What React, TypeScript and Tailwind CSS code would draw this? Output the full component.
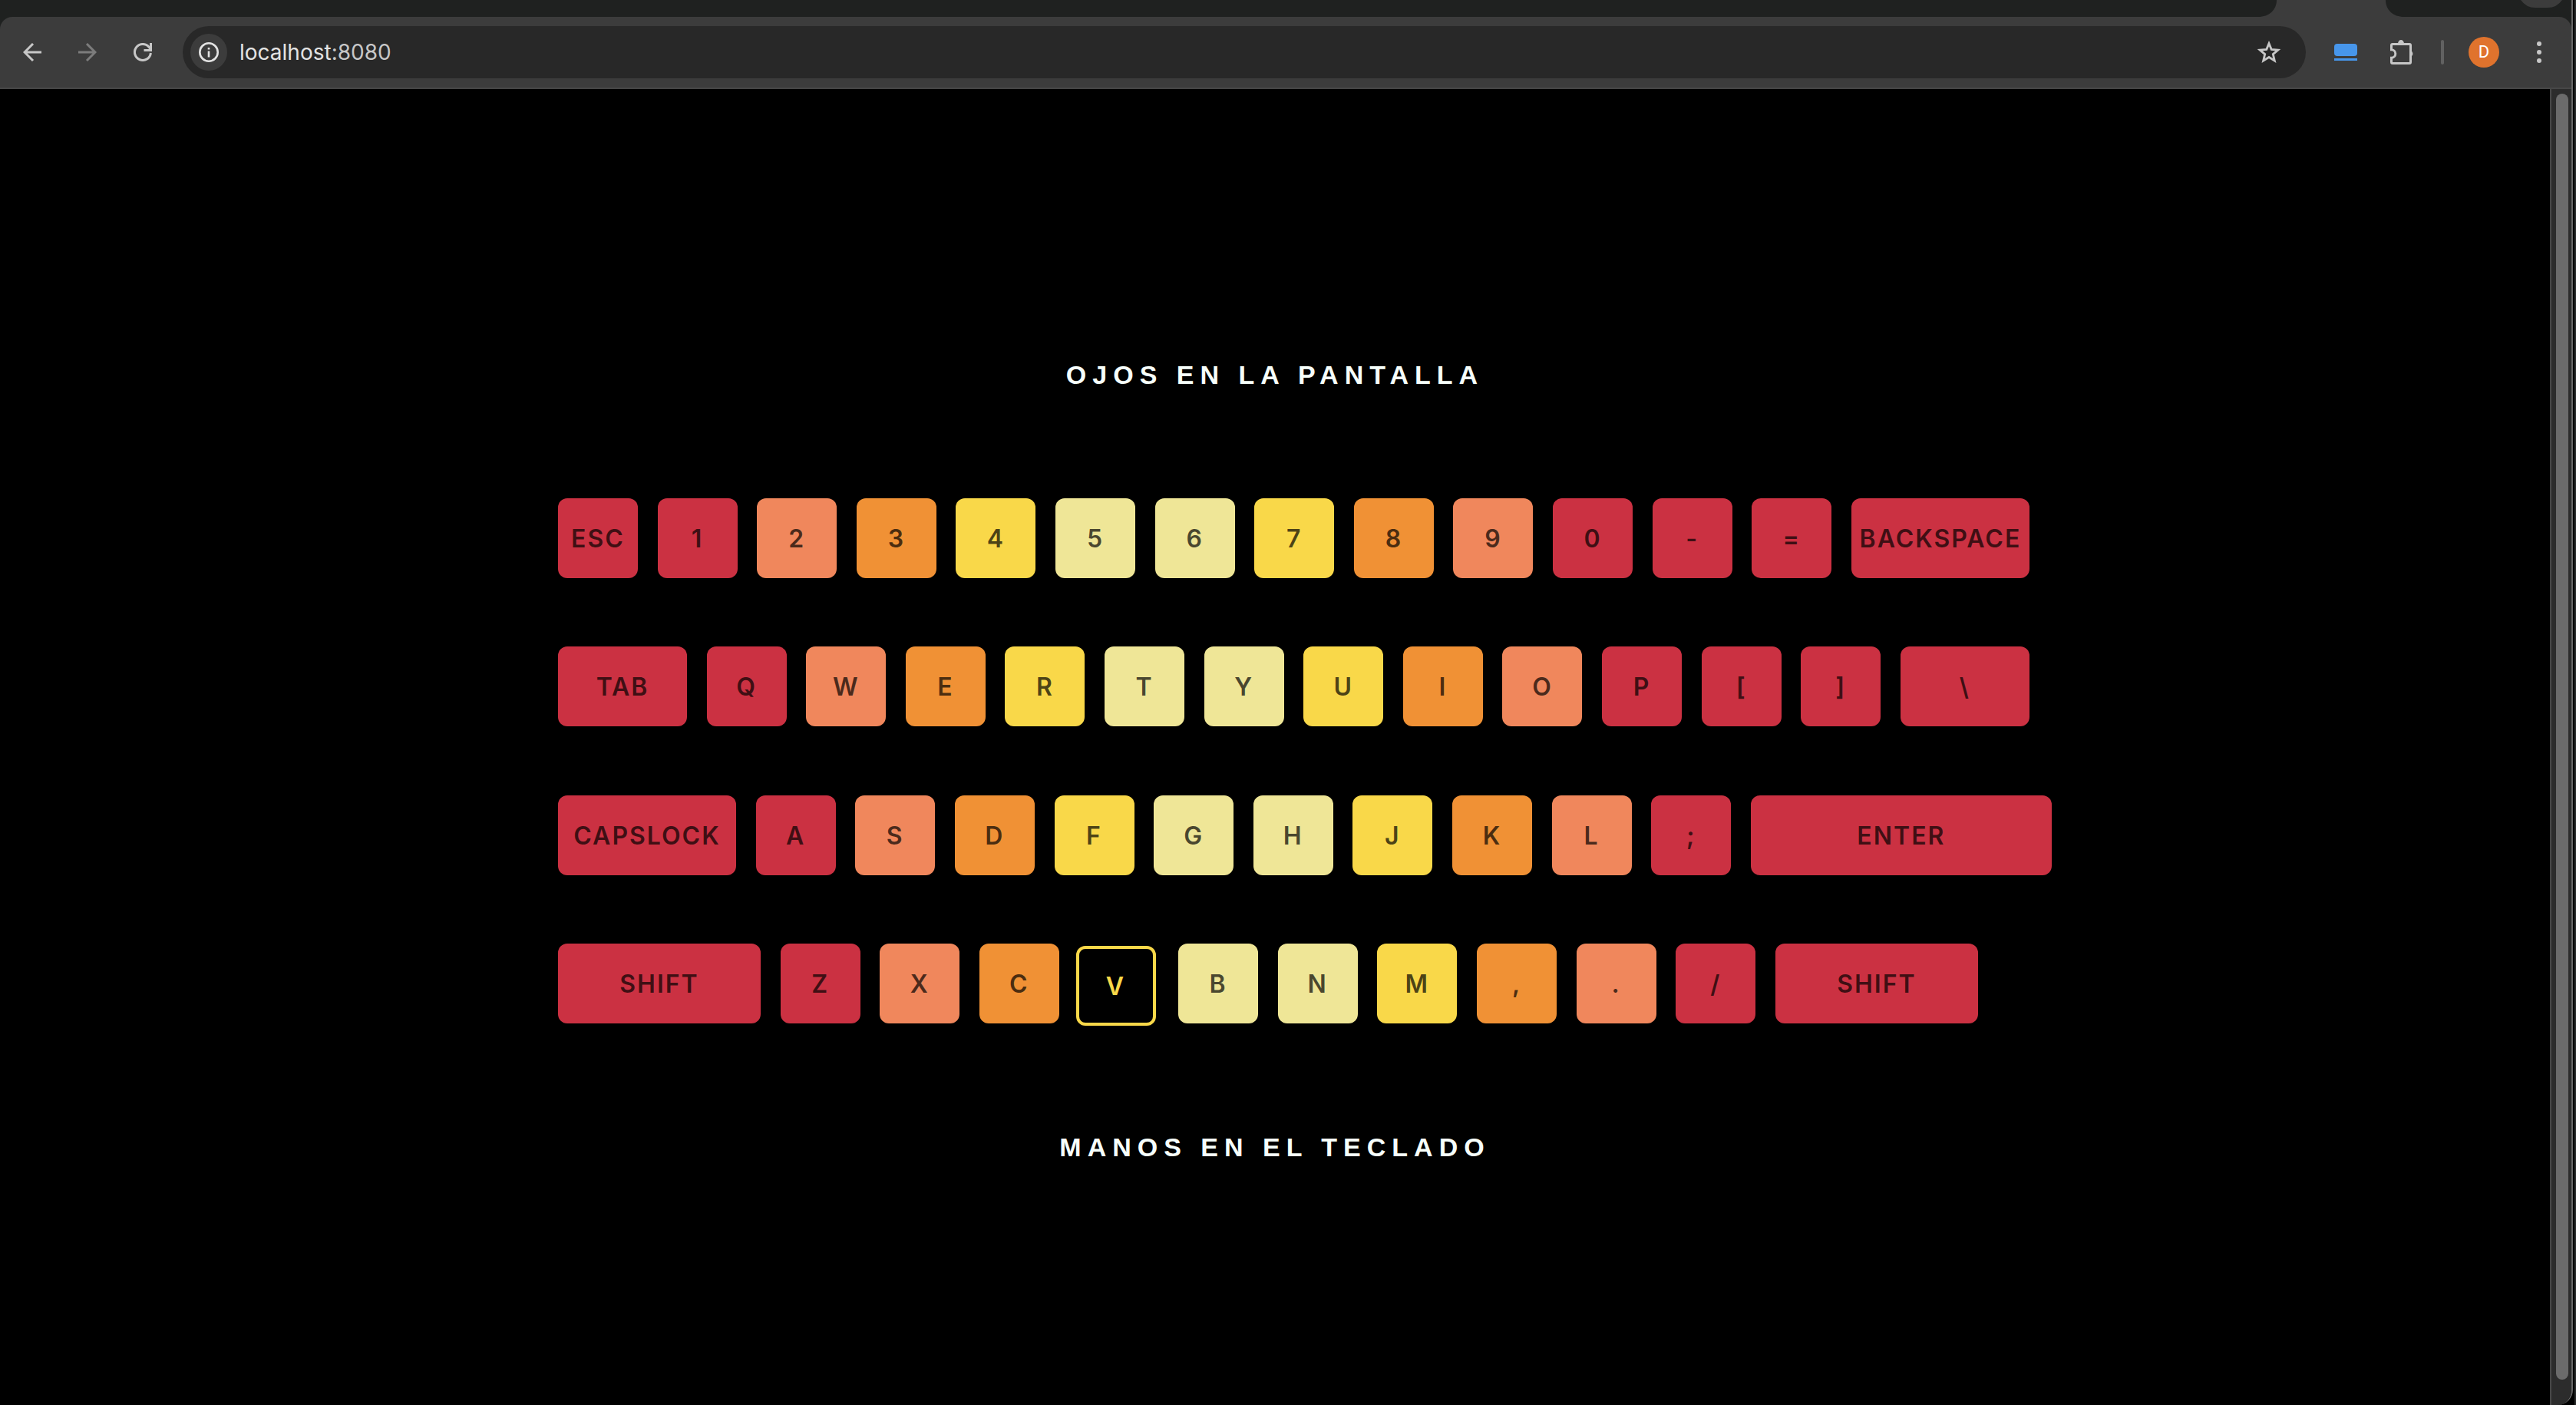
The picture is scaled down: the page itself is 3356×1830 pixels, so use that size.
import React from "react";

type Tone = "red" | "coral" | "orange" | "yellow" | "pale";
type KeyDef = { label: string; tone: Tone; width?: string; active?: boolean };

const TONES: Record<Tone, string> = {
  red: "bg-[#cb3142]",
  coral: "bg-[#f0875c]",
  orange: "bg-[#f09135]",
  yellow: "bg-[#f9d849]",
  pale: "bg-[#efe697]",
};

const TONE_ORDER: Tone[] = ["red", "coral", "orange", "yellow", "pale", "pale", "yellow", "orange", "coral", "red"];

const letters = (text: string): KeyDef[] =>
  text.split("").map((label, i) => ({ label, tone: TONE_ORDER[i] ?? "red" }));

const ROWS: { width: string; keys: KeyDef[] }[] = [
  {
    width: "w-[1917px]",
    keys: [{ label: "ESC", tone: "red" }, ...letters("1234567890-="), { label: "BACKSPACE", tone: "red", width: "w-[232px]" }],
  },
  {
    width: "w-[1917px]",
    keys: [
      { label: "TAB", tone: "red", width: "w-[168px]" },
      ...letters("QWERTYUIOP[]"),
      { label: "\\", tone: "red", width: "w-[168px]" },
    ],
  },
  {
    width: "w-[1946px]",
    keys: [
      { label: "CAPSLOCK", tone: "red", width: "w-[232px]" },
      ...letters("ASDFGHJKL;"),
      { label: "ENTER", tone: "red", width: "w-[392px]" },
    ],
  },
  {
    width: "w-[1850px]",
    keys: [
      { label: "SHIFT", tone: "red", width: "w-[264px]" },
      ...letters("ZXCVBNM,./").map((k) => ({ ...k, active: k.label === "V" })),
      { label: "SHIFT", tone: "red", width: "w-[264px]" },
    ],
  },
];

function Key({ label, tone, width = "w-[104px]", active }: KeyDef) {
  const look = active
    ? "border-4 border-[#f9d849] text-[#f9d849] -translate-x-1 translate-y-[3px]"
    : `${TONES[tone]} text-black/70`;
  return (
    <button
      type="button"
      className={`flex h-[104px] shrink-0 items-center justify-center rounded-xl pt-[2px] text-[32px] leading-9 font-semibold tracking-[2px] ${width} ${look}`}
    >
      {label}
    </button>
  );
}

function TabStrip() {
  return (
    <div className="flex h-[22px] bg-[#1f2120]">
      <div className="flex-1" />
      <svg width="192" height="22" viewBox="0 0 192 22" fill="#3c3c3c" aria-hidden="true">
        <path d="M0 22C14 22 24 13 24 0H166C166 13 176 22 190 22Z" />
      </svg>
      <div className="w-[150px]" />
      <svg width="54" height="10" viewBox="0 0 54 10" fill="#3c3c3c" aria-hidden="true">
        <path d="M0 0Q7 10 19 10H35Q47 10 54 0Z" />
      </svg>
      <div className="w-[12px]" />
    </div>
  );
}

function Toolbar() {
  return (
    <div className="bg-[#1f2120]">
      <div className="flex h-[94px] items-center rounded-t-[16px] border-b-2 border-[#474747] bg-[#3c3c3c] pr-[18px] pl-[18px]">
        <button type="button" aria-label="Back" className="flex size-12 items-center justify-center">
          <svg width="24" height="24" viewBox="0 0 24 24" fill="none" stroke="#c7c7c7" strokeWidth="3" aria-hidden="true">
            <path d="M24 12H2M13 1L2 12L13 23" />
          </svg>
        </button>
        <button type="button" aria-label="Forward" className="ml-6 flex size-12 items-center justify-center">
          <svg width="24" height="24" viewBox="0 0 24 24" fill="none" stroke="#7c7c7c" strokeWidth="3" aria-hidden="true">
            <path d="M0 12H22M11 1L22 12L11 23" />
          </svg>
        </button>
        <button type="button" aria-label="Reload" className="ml-6 flex size-12 items-center justify-center">
          <svg width="24" height="24" viewBox="0 0 24 24" fill="none" stroke="#c7c7c7" strokeWidth="3" aria-hidden="true">
            <path d="M22.4 13A10.5 10.5 0 1 1 20 5.2L22.4 8" />
            <path d="M22.5 0V9.5H13.5" />
          </svg>
        </button>
        <div className="ml-[28px] flex h-[68px] flex-1 items-center rounded-full bg-[#282828] pr-[22px] pl-[10px]">
          <button
            type="button"
            aria-label="View site information"
            className="flex size-12 items-center justify-center rounded-full bg-[#3c3c3c]"
          >
            <svg width="26" height="26" viewBox="0 0 26 26" fill="none" stroke="#e3e3e3" aria-hidden="true">
              <circle cx="13" cy="13" r="11.7" strokeWidth="2.6" />
              <path d="M13 11.5V19.5M13 7V9.4" strokeWidth="2.6" />
            </svg>
          </button>
          <a href="http://localhost:8080" className="ml-4 flex-1 text-[28px] leading-9 text-[#e3e3e3]">
            localhost<span className="text-[#c7c7c7]">:8080</span>
          </a>
          <button type="button" aria-label="Bookmark this tab" className="flex size-[52px] items-center justify-center">
            <svg width="32" height="30" viewBox="0 0 32 30" fill="none" stroke="#c7c7c7" strokeWidth="2.8" aria-hidden="true">
              <path d="M16 3.6L19.2 11.4L27.8 12.1L21.3 17.6L23.3 26L16 21.5L8.7 26L10.7 17.6L4.2 12.1L12.8 11.4Z" />
            </svg>
          </button>
        </div>
        <button type="button" aria-label="Extension" className="ml-[28px] flex size-12 items-center justify-center">
          <svg width="30" height="22" viewBox="0 0 30 22" fill="#4796eb" aria-hidden="true">
            <rect width="30" height="16" rx="4" />
            <rect y="19" width="30" height="3" />
          </svg>
        </button>
        <button type="button" aria-label="Extensions" className="ml-[26px] flex size-12 items-center justify-center">
          <svg width="32" height="32" viewBox="0 0 32 32" aria-hidden="true">
            <path d="M10 5A4 5 0 0 1 18 5ZM27 14A4.5 4.5 0 0 1 27 22Z" fill="#c7c7c7" />
            <path
              d="M3 5.5H25Q26.5 5.5 26.5 7V29Q26.5 30.5 25 30.5H3Q1.5 30.5 1.5 29V23.3A5.3 5.3 0 0 0 1.5 12.7V7Q1.5 5.5 3 5.5Z"
              fill="none"
              stroke="#c7c7c7"
              strokeWidth="3"
            />
          </svg>
        </button>
        <div className="ml-[26px] h-8 w-1 rounded-full bg-[#616161]" />
        <button
          type="button"
          aria-label="Profile"
          className="ml-8 flex size-10 items-center justify-center rounded-full bg-[#e0732d] font-['Roboto'] text-[22px] leading-6 text-white"
        >
          D
        </button>
        <button type="button" aria-label="Menu" className="ml-[28px] flex size-12 items-center justify-center">
          <svg width="6" height="28" viewBox="0 0 6 28" fill="#c7c7c7" aria-hidden="true">
            <circle cx="3" cy="3" r="3" />
            <circle cx="3" cy="14" r="3" />
            <circle cx="3" cy="25" r="3" />
          </svg>
        </button>
      </div>
    </div>
  );
}

function Heading({ children }: { children: React.ReactNode }) {
  return (
    <h2 className="font-['Liberation_Sans',sans-serif] text-[34px] leading-9 font-bold tracking-[8px] text-[#f7fffb]">
      {children}
    </h2>
  );
}

export default function App() {
  return (
    <div className="flex min-h-screen bg-black font-['Inter',sans-serif]">
      <div className="flex min-w-0 flex-1 flex-col overflow-hidden rounded-b-[20px] border-r-2 border-[#686868]">
        <TabStrip />
        <Toolbar />
        <div className="flex flex-1">
          <main className="flex min-w-0 flex-1 flex-col items-center bg-black pt-[354px]">
            <Heading>OJOS EN LA PANTALLA</Heading>
            <div className="mt-[143px] flex h-[684px] w-[1868px] flex-col justify-between">
              {ROWS.map((row, i) => (
                <div key={i} className={`flex justify-between ${row.width}`}>
                  {row.keys.map((key, j) => (
                    <Key key={j} {...key} />
                  ))}
                </div>
              ))}
            </div>
            <div className="mt-[143px]">
              <Heading>MANOS EN EL TECLADO</Heading>
            </div>
          </main>
          <div className="flex w-[28px] flex-col border-l-2 border-[#474747] bg-[#2c2c2c] pt-[6px] pb-[33px] pl-[6px]">
            <div className="w-4 flex-1 rounded-full bg-[#6b6b6b]" />
          </div>
        </div>
      </div>
      <div className="ml-[2px] w-[2px] bg-[#2a2c2c]" />
    </div>
  );
}
